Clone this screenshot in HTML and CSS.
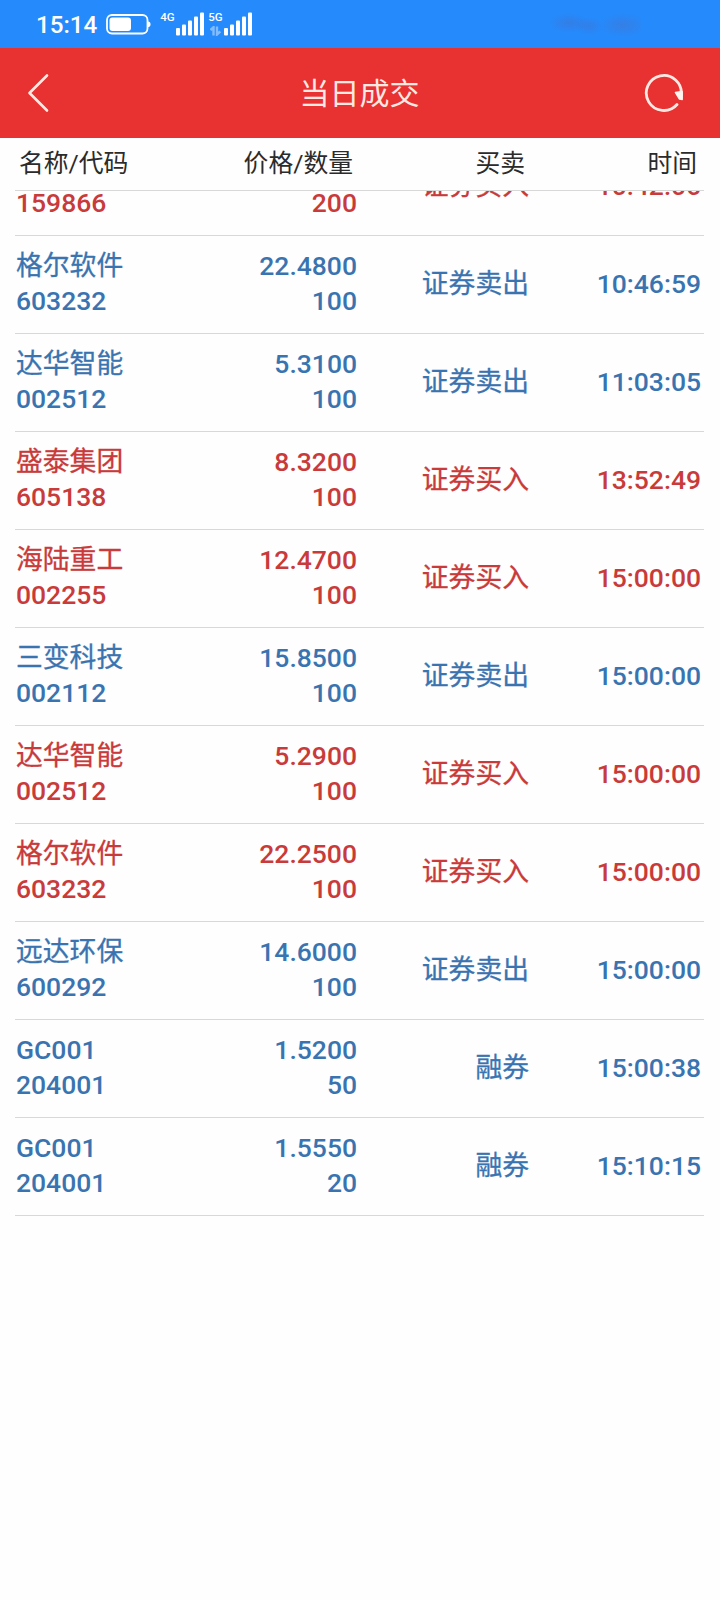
FILE: index.html
```html
<!DOCTYPE html>
<html lang="zh-CN">
<head>
  <meta charset="UTF-8">
  <title>当日成交</title>
  <link rel="stylesheet" href="styles.css">
</head>
<body>

  <div class="status-bar">
    <span class="clock">15:14</span>
    <svg class="battery" width="45" height="21" viewBox="0 0 45 21">
      <rect x="1" y="1" width="40.5" height="18.5" rx="5" fill="none" stroke="#fff" stroke-width="1.8"/>
      <rect x="3.5" y="3.5" width="21.5" height="13.5" rx="3" fill="#fff"/>
      <path d="M42 7.5q2.5 0 2.5 2.8t-2.5 2.8z" fill="#fff"/>
    </svg>
    <div class="net">
      <span class="net-type">4G</span>
    </div>
    <svg class="signal" width="29" height="24" viewBox="0 0 29 24" fill="#fff">
      <rect x="0" y="16" width="4" height="7.5" rx="1"/>
      <rect x="6" y="12.5" width="4" height="11" rx="1"/>
      <rect x="12" y="8.5" width="4" height="15" rx="1"/>
      <rect x="18" y="4.5" width="4" height="19" rx="1"/>
      <rect x="24" y="0.5" width="4" height="23" rx="1"/>
    </svg>
    <div class="net second">
      <span class="net-type">5G</span>
      <svg class="updown" width="11" height="10" viewBox="0 0 11 10" fill="none" stroke="#83bdff" stroke-width="2.4">
        <path d="M0.5 4L3.5 1.2V9.5M7 0.5V8.5L10.3 5.5"/>
      </svg>
    </div>
    <svg class="signal" width="29" height="24" viewBox="0 0 29 24" fill="#fff">
      <rect x="0" y="16" width="4" height="7.5" rx="1"/>
      <rect x="6" y="12.5" width="4" height="11" rx="1"/>
      <rect x="12" y="8.5" width="4" height="15" rx="1"/>
      <rect x="18" y="4.5" width="4" height="19" rx="1"/>
      <rect x="24" y="0.5" width="4" height="23" rx="1"/>
    </svg>
    <div class="smudge"></div>
  </div>

  <div class="title-bar">
    <svg class="back" width="22" height="40" viewBox="0 0 22 40">
      <path d="M20 2.5L2.5 20L20 37.5" fill="none" stroke="#ffe9e2" stroke-width="2.6" stroke-linecap="round" stroke-linejoin="round"/>
    </svg>
    <h1 class="title">当日成交</h1>
    <svg class="refresh" width="40" height="40" viewBox="0 0 40 40">
      <path d="M33 31.5A17.5 17.5 0 1 1 37.2 22" fill="none" stroke="#ffe9e2" stroke-width="2.8" stroke-linecap="round"/>
      <path d="M31.5 19.5L38.2 18.5V26.5L35.5 26Z" fill="#fff3ee" stroke="#fff3ee" stroke-width="1.5" stroke-linejoin="round"/>
    </svg>
  </div>

  <div class="table-head">
    <div class="name">名称/代码</div>
    <div class="price">价格/数量</div>
    <div class="side">买卖</div>
    <div class="time">时间</div>
  </div>

  <div class="list">
    <div class="row buy">
      <div class="name">&nbsp;<br>159866</div>
      <div class="price">&nbsp;<br>200</div>
      <div class="side">证券买入</div>
      <div class="time">10:42:06</div>
    </div>
    <div class="row sell">
      <div class="name"><span class="cn">格尔软件</span><br>603232</div>
      <div class="price">22.4800<br>100</div>
      <div class="side">证券卖出</div>
      <div class="time">10:46:59</div>
    </div>
    <div class="row sell">
      <div class="name"><span class="cn">达华智能</span><br>002512</div>
      <div class="price">5.3100<br>100</div>
      <div class="side">证券卖出</div>
      <div class="time">11:03:05</div>
    </div>
    <div class="row buy">
      <div class="name"><span class="cn">盛泰集团</span><br>605138</div>
      <div class="price">8.3200<br>100</div>
      <div class="side">证券买入</div>
      <div class="time">13:52:49</div>
    </div>
    <div class="row buy">
      <div class="name"><span class="cn">海陆重工</span><br>002255</div>
      <div class="price">12.4700<br>100</div>
      <div class="side">证券买入</div>
      <div class="time">15:00:00</div>
    </div>
    <div class="row sell">
      <div class="name"><span class="cn">三变科技</span><br>002112</div>
      <div class="price">15.8500<br>100</div>
      <div class="side">证券卖出</div>
      <div class="time">15:00:00</div>
    </div>
    <div class="row buy">
      <div class="name"><span class="cn">达华智能</span><br>002512</div>
      <div class="price">5.2900<br>100</div>
      <div class="side">证券买入</div>
      <div class="time">15:00:00</div>
    </div>
    <div class="row buy">
      <div class="name"><span class="cn">格尔软件</span><br>603232</div>
      <div class="price">22.2500<br>100</div>
      <div class="side">证券买入</div>
      <div class="time">15:00:00</div>
    </div>
    <div class="row sell">
      <div class="name"><span class="cn">远达环保</span><br>600292</div>
      <div class="price">14.6000<br>100</div>
      <div class="side">证券卖出</div>
      <div class="time">15:00:00</div>
    </div>
    <div class="row sell">
      <div class="name">GC001<br>204001</div>
      <div class="price">1.5200<br>50</div>
      <div class="side">融券</div>
      <div class="time">15:00:38</div>
    </div>
    <div class="row sell">
      <div class="name">GC001<br>204001</div>
      <div class="price">1.5550<br>20</div>
      <div class="side">融券</div>
      <div class="time">15:10:15</div>
    </div>
  </div>

</body>
</html>
```
FILE: styles.css
```css
* {
  box-sizing: border-box;
}
body {
  margin: 0;
  height: 1600px;
  background: #fefefe;
  font-family: Roboto, "Noto Sans CJK SC", sans-serif;
  overflow: hidden;
}

/* status bar */
.status-bar {
  display: flex;
  align-items: center;
  height: 48px;
  padding-left: 36px;
  background: #258afc;
  color: #fff;
}
.clock {
  width: 70px;
  padding-top: 1px;
  font-size: 24.2px;
  font-weight: 500;
  line-height: 48px;
}
.net {
  display: flex;
  flex-direction: column;
  align-items: center;
  width: 15px;
  height: 24px;
  margin-left: 9px;
}
.net.second {
  margin-left: 3px;
}
.net-type {
  font-size: 11.5px;
  font-weight: 500;
  line-height: 11px;
}
.updown {
  margin-top: 3px;
}
.signal {
  margin-left: 1px;
}
.smudge {
  width: 94px;
  height: 30px;
  margin-left: 294px;
  background:
    radial-gradient(ellipse 20px 10px at 22px 14px, rgba(70, 110, 200, 0.45), transparent),
    radial-gradient(ellipse 14px 9px at 42px 17px, rgba(70, 110, 200, 0.4), transparent),
    radial-gradient(ellipse 24px 12px at 76px 16px, rgba(70, 115, 205, 0.5), transparent);
}

/* title bar */
.title-bar {
  display: flex;
  align-items: center;
  height: 90px;
  padding: 0 36px 0 27px;
  background: #e83131;
}
.title {
  flex: 1;
  margin: 0;
  padding: 0 0 5px 13px;
  font-size: 30px;
  font-weight: 400;
  text-align: center;
  color: #ffe9e2;
}
.back {
  margin-right: 13px;
}

/* trade table */
.table-head,
.row {
  display: grid;
  grid-template-columns: 170px 171px 172px 1fr;
  align-items: center;
  margin: 0 16px 0 15px;
  border-bottom: 1px solid #d8d8d8;
}
.table-head {
  height: 53px;
  padding: 0 7px 7px 4px;
  font-size: 24.8px;
  color: #2b2b2b;
}
.price,
.side,
.time {
  text-align: right;
}
.table-head .price {
  padding-right: 7px;
}
.table-head .side {
  padding-right: 7px;
}
.list {
  overflow: hidden;
}
.row {
  height: 98px;
  padding: 0 3px 2px 1px;
  font-size: 26.5px;
  font-weight: 500;
  line-height: 35px;
}
.row .name,
.row .price {
  padding-bottom: 2px;
}
.row .cn,
.row .side {
  font-size: 26.8px;
  font-weight: 400;
  -webkit-text-stroke: 0.3px currentColor;
}
.row .cn {
  position: relative;
  top: 1px;
}
.row .side {
  padding-top: 2px;
}
/* list is scrolled, first row shows only its lower part */
.row:first-child {
  margin-top: -53px;
}
.buy {
  color: #c93a3a;
}
.sell {
  color: #3a74b0;
}
```
